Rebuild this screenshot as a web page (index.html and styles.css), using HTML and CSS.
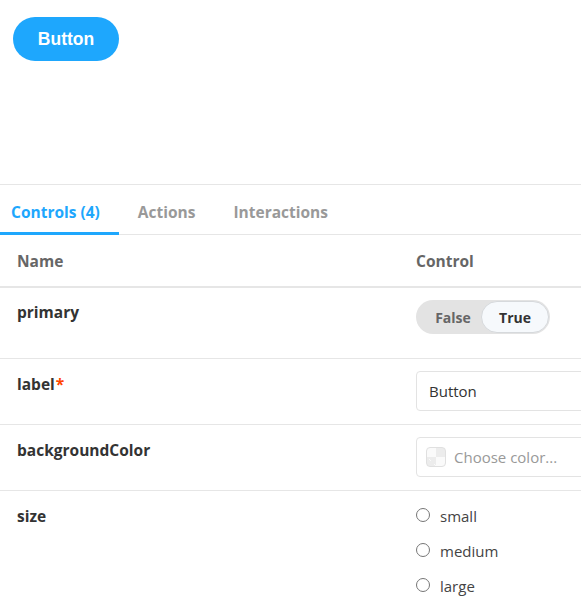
FILE: index.html
```html
<!DOCTYPE html>
<html>
<head>
<meta charset="utf-8">
<link rel="stylesheet" href="styles.css">
</head>
<body>
<div class="preview">
  <button class="sb-button">Button</button>
</div>
<div class="addons">
  <div class="tabs">
    <div class="tab active">Controls (4)</div>
    <div class="tab">Actions</div>
    <div class="tab">Interactions</div>
  </div>
  <div class="table">
    <div class="row head">
      <div class="c-name">Name</div>
      <div class="c-control">Control</div>
    </div>
    <div class="row r-primary">
      <div class="c-name">primary</div>
      <div class="c-control">
        <div class="toggle">
          <span class="opt">False</span>
          <span class="opt on">True</span>
        </div>
      </div>
    </div>
    <div class="row r-input">
      <div class="c-name">label<span class="req">*</span></div>
      <div class="c-control">
        <div class="input">Button</div>
      </div>
    </div>
    <div class="row r-input">
      <div class="c-name">backgroundColor</div>
      <div class="c-control">
        <div class="input color"><span class="swatch"></span><span class="ph">Choose color...</span></div>
      </div>
    </div>
    <div class="row r-size">
      <div class="c-name">size</div>
      <div class="c-control">
        <div class="radios">
          <label class="radio"><span class="circle"></span>small</label>
          <label class="radio"><span class="circle"></span>medium</label>
          <label class="radio"><span class="circle"></span>large</label>
        </div>
      </div>
    </div>
  </div>
</div>
</body>
</html>
```
FILE: styles.css
```css
* { box-sizing: border-box; }
html, body { margin: 0; padding: 0; }
body {
  width: 581px;
  height: 606px;
  overflow: hidden;
  background: #fff;
  font-family: "Open Sans", "Noto Sans", sans-serif;
  color: #333;
}
.preview {
  height: 184px;
  padding: 17px 13px;
}
.sb-button {
  font-family: "Liberation Sans", Arial, sans-serif;
  font-weight: 700;
  font-size: 17.5px;
  color: #fff;
  background: #1ea7fd;
  border: 0;
  border-radius: 22px;
  width: 106px;
  height: 44px;
  padding: 0;
  cursor: pointer;
}
.addons {
  border-top: 1px solid #e6e6e6;
}
.tabs {
  display: flex;
  height: 50px;
  margin-left: -8px;
  border-bottom: 1px solid #e6e6e6;
}
.tab {
  padding: 0 19px;
  display: flex;
  align-items: center;
  font-size: 15.5px;
  font-weight: 700;
  color: #999;
  border-bottom: 3px solid transparent;
  margin-bottom: -1px;
  padding-top: 6px;
}
.tab.active {
  color: #1ea7fd;
  border-bottom-color: #1ea7fd;
}
.row {
  display: flex;
  border-top: 1px solid #e6e6e6;
}
.row.head {
  border-top: 0;
  border-bottom: 1px solid #e6e6e6;
  height: 52px;
  align-items: center;
  color: #666;
}
.row.head + .row { border-top: 1px solid #e6e6e6; }
.c-name {
  width: 416px;
  flex: none;
  padding-left: 17px;
  font-size: 15.5px;
  font-weight: 700;
  line-height: 20px;
}
.row.head .c-control {
  font-size: 15.5px;
  font-weight: 700;
}
.row:not(.head) .c-name {
  padding-top: 15px;
  color: #333;
}
.row.r-primary .c-name { padding-top: 14px; }
.c-control {
  flex: 1;
  min-width: 0;
}
.r-primary { height: 71px; }
.r-primary .c-control { padding-top: 12px; }
.toggle {
  display: inline-flex;
  background: #e3e3e3;
  border-radius: 17px;
  height: 34px;
  width: 134px;
  padding: 1px;
}
.opt {
  flex: none;
  display: flex;
  align-items: center;
  justify-content: center;
  font-size: 14px;
  font-weight: 700;
  color: #666;
  width: 64px;
  padding-left: 8px;
  border-radius: 16px;
}
.opt.on {
  width: 68px;
  padding-left: 0;
  background: #f6f9fc;
  color: #333;
  border: 1px solid #d6d9dc;
}
.r-input { height: 66px; }
.r-input .c-control { padding-top: 12px; }
.input {
  width: 220px;
  height: 40px;
  border: 1px solid #e3e3e3;
  border-radius: 4px;
  display: flex;
  align-items: center;
  padding-left: 12px;
  font-size: 15px;
  color: #333;
  background: #fff;
}
.input.color { padding-left: 9px; }
.swatch {
  width: 20px;
  height: 20px;
  border-radius: 4px;
  margin-right: 8px;
  border: 1px solid #e0e0e0;
  background:
    linear-gradient(45deg, #ececec 25%, transparent 25%, transparent 75%, #ececec 75%),
    linear-gradient(45deg, #ececec 25%, transparent 25%, transparent 75%, #ececec 75%);
  background-color: #fafafa;
  background-size: 18px 18px;
  background-position: 0 0, 9px 9px;
}
.ph { color: #999; font-size: 15px; }
.r-size { height: 120px; }
.r-size .c-control { padding-top: 15px; }
.radios {
  display: flex;
  flex-direction: column;
  gap: 15px;
}
.radio {
  display: flex;
  align-items: center;
  height: 20px;
  font-size: 15px;
  color: #444;
}
.circle {
  width: 14px;
  height: 14px;
  border: 1px solid #767676;
  border-radius: 50%;
  margin-right: 10px;
  margin-top: -2px;
}
.req { color: #ff4400; margin-left: 1px; }
```
